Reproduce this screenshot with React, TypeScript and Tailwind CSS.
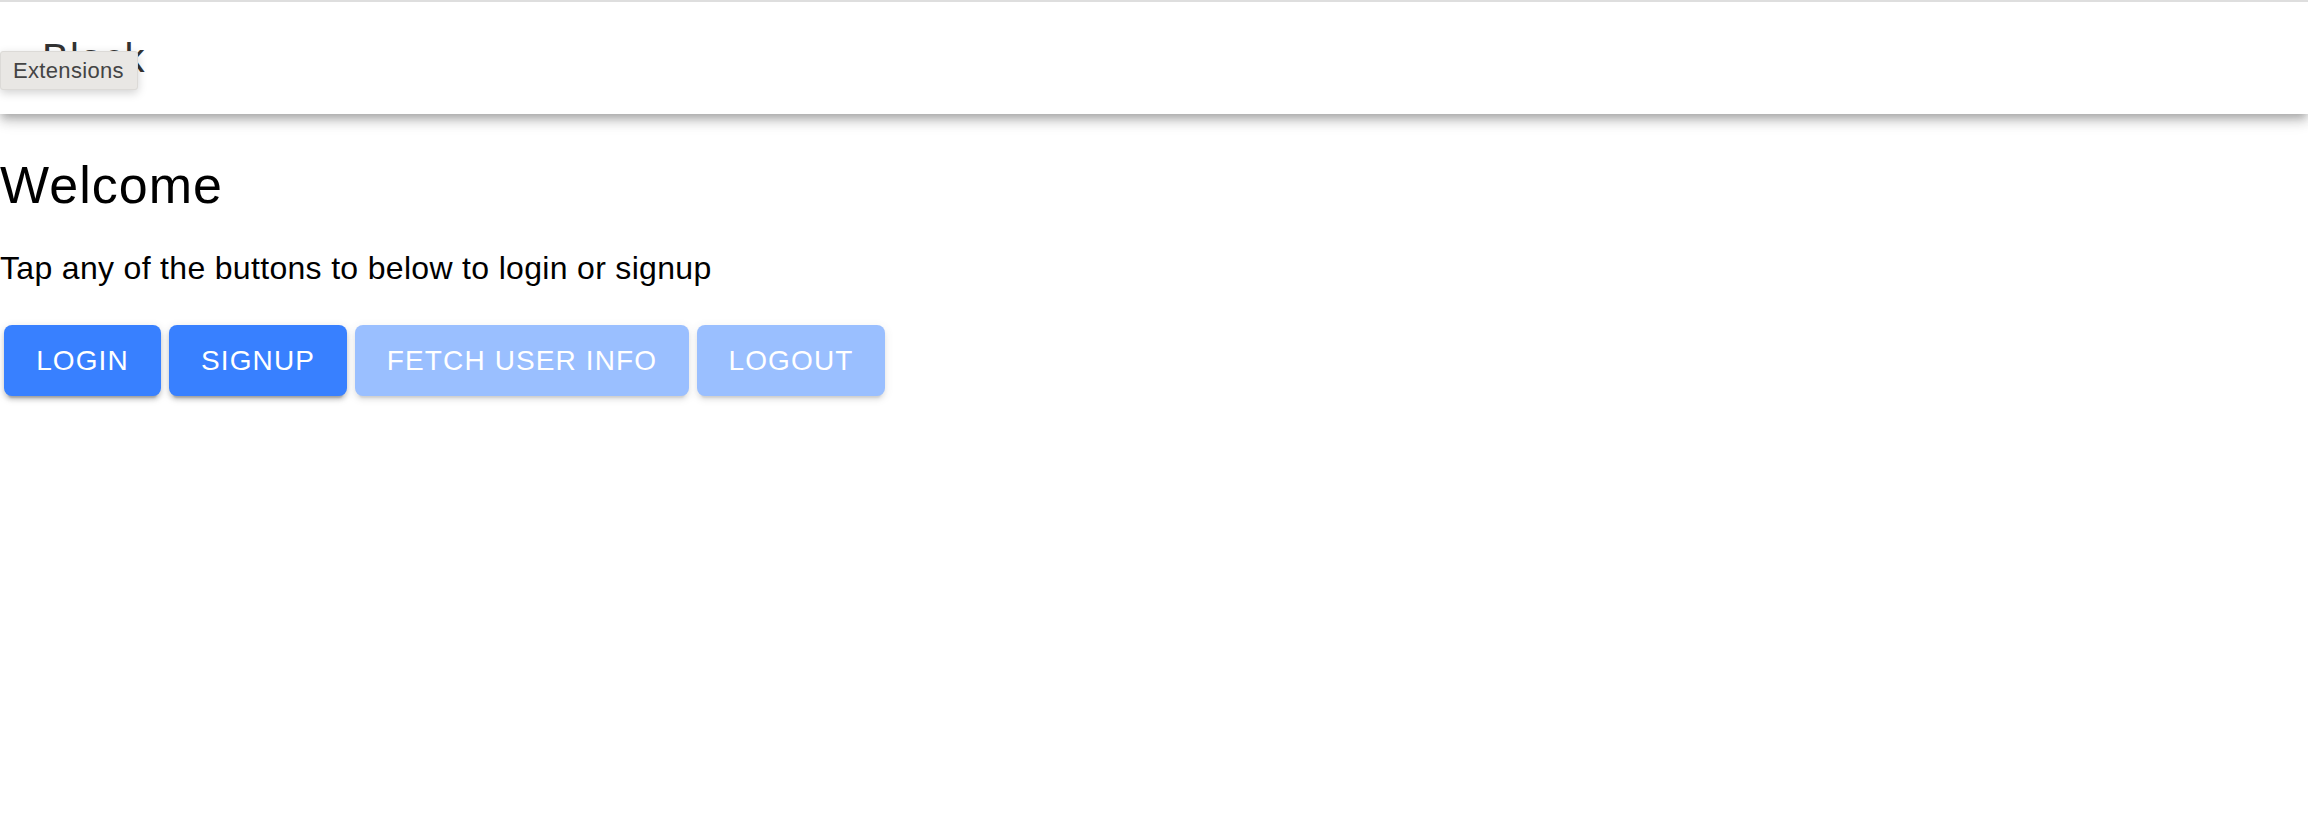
import React from 'react'

const font = { fontFamily: '"Liberation Sans", Arial, sans-serif' }

function ActionButton({
  label,
  width,
  disabled = false,
}: {
  label: string
  width: string
  disabled?: boolean
}) {
  return (
    <button
      disabled={disabled}
      className={`${width} h-[71px] rounded-[8px] bg-[#3880ff] text-white text-[28px] uppercase tracking-[0.04em] flex items-center justify-center shadow-[0_6px_2px_-4px_rgba(0,0,0,0.2),0_4px_4px_0_rgba(0,0,0,0.14),0_2px_10px_0_rgba(0,0,0,0.12)] ${
        disabled ? 'opacity-50 cursor-default' : 'cursor-pointer'
      }`}
    >
      {label}
    </button>
  )
}

export default function App() {
  return (
    <div className="min-h-screen w-full bg-white relative overflow-hidden" style={font}>
      <header className="relative z-10 h-[114px] border-t-2 border-[#dedede] bg-white flex items-center pl-[42px] shadow-[0_4px_8px_-2px_rgba(0,0,0,0.2),0_8px_10px_0_rgba(0,0,0,0.14),0_2px_20px_0_rgba(0,0,0,0.12)]">
        <div className="text-[40px] font-medium tracking-[0.03em] text-[#333] leading-none">Black</div>
      </header>

      {/* browser tooltip over the title */}
      <div className="absolute left-0 top-[51px] z-20 w-[138px] h-[39px] flex items-center pl-[12px] bg-[#e9e7e4] border border-[#dcdad7] rounded-[3px] text-[22px] tracking-[0.015em] text-[#444] shadow-[0_3px_10px_rgba(0,0,0,0.18)]">
        Extensions
      </div>

      <main>
        <h1 className="mt-[40px] text-[52px] leading-[1.2] font-medium tracking-[0.02em] text-black">Welcome</h1>
        <p className="mt-[34px] text-[32px] leading-[37px] tracking-[0.01em] text-black">
          Tap any of the buttons to below to login or signup
        </p>
        <div className="mt-[38px] pl-[4px] flex gap-[8px]">
          <ActionButton label="Login" width="w-[157px]" />
          <ActionButton label="Signup" width="w-[178px]" />
          <ActionButton label="Fetch User Info" width="w-[334px]" disabled />
          <ActionButton label="Logout" width="w-[188px]" disabled />
        </div>
      </main>
    </div>
  )
}
